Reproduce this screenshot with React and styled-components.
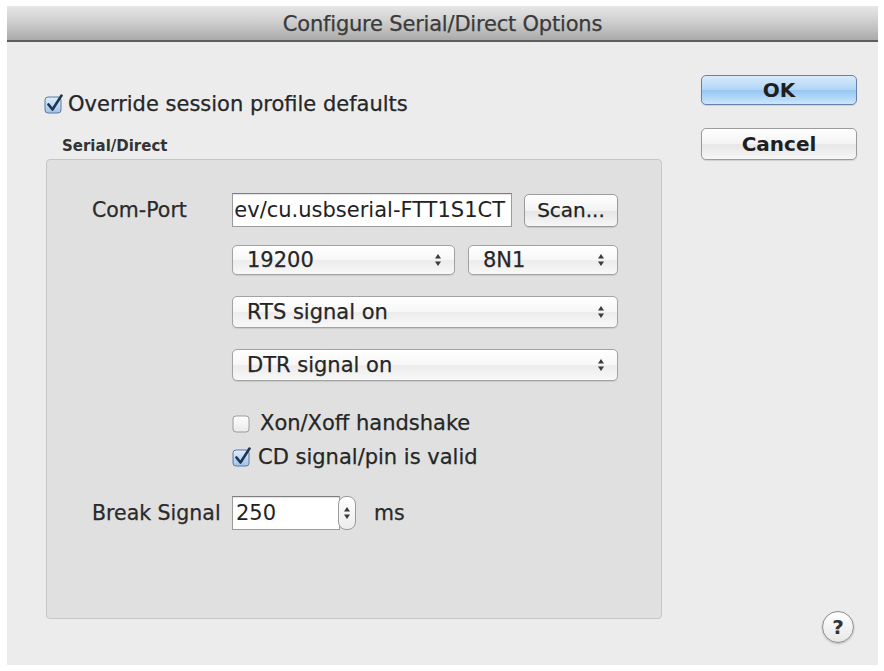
import React from "react";
import styled, { createGlobalStyle } from "styled-components";

const GlobalStyle = createGlobalStyle`
    html, body {
        margin: 0;
        padding: 0;
        background: #ffffff;
    }
    body {
        font-family: "DejaVu Sans", "Noto Sans", sans-serif;
        color: #222;
        -webkit-text-stroke: 0.25px currentColor;
    }
`;

const Window = styled.div`
    margin: 6px 0 0 7px;
    width: 871px;
    height: 659px;
    background: #ececec;
    display: flex;
    flex-direction: column;
`;

const TitleBar = styled.div`
    height: 36px;
    flex: none;
    display: flex;
    align-items: center;
    justify-content: center;
    padding-top: 2px;
    box-sizing: border-box;
    background: linear-gradient(#e6e6e6, #cfcfcf 45%, #aaaaaa);
    border-bottom: 2px solid #5e5e5e;
    font-size: 21px;
    color: #3a3a3a;
    letter-spacing: -0.2px;
`;

const Body = styled.div`
    flex: 1;
    display: grid;
    grid-template-columns: 616px 156px;
    column-gap: 39px;
    padding: 0 0 20px 39px;
`;

const LeftColumn = styled.div`
    display: flex;
    flex-direction: column;
    padding-top: 51px;
`;

const RightColumn = styled.div`
    display: flex;
    flex-direction: column;
    padding-top: 33px;
`;

const CheckRow = styled.label`
    display: flex;
    align-items: center;
    height: 22px;
    margin-top: ${(p) => p.$top || 0}px;
    margin-left: ${(p) => p.$left || 0}px;
    font-size: 21px;
    color: #262626;
    gap: ${(p) => p.$gap || 4}px;
`;

const SectionLabel = styled.div`
    margin: 21px 0 3px 16px;
    font-size: 15px;
    font-weight: bold;
    color: #333;
    line-height: 20px;
    -webkit-text-stroke: 0;
`;

const GroupBox = styled.div`
    height: 460px;
    border: 1px solid #c6c6c6;
    border-radius: 4px;
    background: #e0e0e0;
    padding: 33px 0 0 45px;
    box-sizing: border-box;
    display: flex;
    flex-direction: column;
`;

const Row = styled.div`
    display: flex;
    align-items: center;
    margin-top: ${(p) => p.$top || 0}px;
    margin-left: ${(p) => p.$indent || 0}px;
    gap: ${(p) => p.$gap || 0}px;
`;

const FieldLabel = styled.div`
    width: 140px;
    flex: none;
    font-size: 20.5px;
    color: #2a2a2a;
`;

const TextField = styled.div`
    width: ${(p) => p.$w}px;
    height: 34px;
    flex: none;
    box-sizing: border-box;
    background: #fff;
    border: 1px solid #9c9c9c;
    border-top-color: #7e7e7e;
    box-shadow: inset 0 1px 1px rgba(0, 0, 0, 0.12);
    display: flex;
    align-items: center;
    justify-content: ${(p) => (p.$end ? "flex-end" : "flex-start")};
    overflow: hidden;
    white-space: nowrap;
    padding: 0 ${(p) => (p.$end ? 6 : 3)}px;
    font-size: 21px;
    color: #222;
    -webkit-text-stroke: 0;
`;

const PushButton = styled.div`
    width: ${(p) => p.$w}px;
    height: ${(p) => p.$h || 32}px;
    flex: none;
    box-sizing: border-box;
    display: flex;
    align-items: center;
    justify-content: center;
    border-radius: 5px;
    border: 1px solid ${(p) => (p.$primary ? "#6782a8" : "#9b9b9b")};
    background: ${(p) =>
        p.$primary
            ? "linear-gradient(#d9ebfb, #b2d6f6 48%, #96c6f1 52%, #cbe6fd)"
            : "linear-gradient(#ffffff, #f3f3f3 50%, #e6e6e6 52%, #f6f6f6)"};
    box-shadow: 0 1px 1px rgba(0, 0, 0, 0.12);
    font-size: ${(p) => p.$size || 20}px;
    font-weight: ${(p) => (p.$bold ? "bold" : "normal")};
    color: #1f1f1f;
    margin-top: ${(p) => p.$top || 0}px;
    margin-left: ${(p) => p.$left || 0}px;
    -webkit-text-stroke: ${(p) => (p.$bold ? 0 : "0.25px currentColor")};
`;

const Select = styled.div`
    width: ${(p) => p.$w}px;
    height: ${(p) => p.$h || 31}px;
    box-sizing: border-box;
    display: flex;
    align-items: center;
    justify-content: space-between;
    padding: 0 12px 0 14px;
    border-radius: 5px;
    border: 1px solid #a3a3a3;
    background: linear-gradient(#ffffff, #f7f7f7 50%, #ececec 52%, #f8f8f8);
    box-shadow: 0 1px 1px rgba(0, 0, 0, 0.1);
    font-size: 21px;
    color: #262626;
`;

const Unit = styled.span`
    font-size: 20.5px;
    color: #2a2a2a;
    margin-left: 18px;
`;

const Stepper = styled.div`
    width: 18px;
    height: 34px;
    flex: none;
    box-sizing: border-box;
    border: 1px solid #9a9a9a;
    border-radius: 8px;
    background: linear-gradient(#ffffff, #ececec);
    display: flex;
    align-items: center;
    justify-content: center;
    margin-left: -2px;
`;

const HelpButton = styled.div`
    width: 32px;
    height: 32px;
    box-sizing: border-box;
    margin: auto 3px 2px auto;
    border-radius: 50%;
    border: 1px solid #8c8c8c;
    background: linear-gradient(#ffffff, #e8e8e8);
    box-shadow: 0 1px 2px rgba(0, 0, 0, 0.2);
    display: flex;
    align-items: center;
    justify-content: center;
    font-size: 20px;
    font-weight: bold;
    color: #333;
    -webkit-text-stroke: 0;
`;

function CheckBox({ checked }) {
    return (
        <svg width="20" height="20" viewBox="0 0 20 20">
            <defs>
                <linearGradient id="cbOn" x1="0" y1="0" x2="0" y2="1">
                    <stop offset="0" stopColor="#e1eefb" />
                    <stop offset="1" stopColor="#9fc2e8" />
                </linearGradient>
                <linearGradient id="cbOff" x1="0" y1="0" x2="0" y2="1">
                    <stop offset="0" stopColor="#ffffff" />
                    <stop offset="1" stopColor="#e9e9e9" />
                </linearGradient>
            </defs>
            <rect
                x="1"
                y="3"
                width="16"
                height="16"
                rx="3"
                fill={checked ? "url(#cbOn)" : "url(#cbOff)"}
                stroke={checked ? "#5b7ba2" : "#9c9c9c"}
            />
            {checked && (
                <path
                    d="M4.5 10.5 L8.5 15.5 L17.5 1.5"
                    fill="none"
                    stroke="#1e3556"
                    strokeWidth="2.6"
                    strokeLinecap="round"
                    strokeLinejoin="round"
                />
            )}
        </svg>
    );
}

function Arrows() {
    return (
        <svg width="8" height="16" viewBox="0 0 8 16">
            <path d="M1 6.5 L4 2 L7 6.5 Z" fill="#3a3a3a" />
            <path d="M1 9.5 L4 14 L7 9.5 Z" fill="#3a3a3a" />
        </svg>
    );
}

export default function App() {
    return (
        <>
            <GlobalStyle />
            <Window>
                <TitleBar>Configure Serial/Direct Options</TitleBar>
                <Body>
                    <LeftColumn>
                        <CheckRow $left={-2}>
                            <CheckBox checked />
                            Override session profile defaults
                        </CheckRow>
                        <SectionLabel>Serial/Direct</SectionLabel>
                        <GroupBox>
                            <Row>
                                <FieldLabel>Com-Port</FieldLabel>
                                <TextField $w={280} $end>
                                    /dev/cu.usbserial-FTT1S1CT
                                </TextField>
                                <PushButton $w={94} $h={33} $left={12}>
                                    Scan...
                                </PushButton>
                            </Row>
                            <Row $indent={140} $top={18} $gap={13}>
                                <Select $w={223} $h={30}>
                                    19200
                                    <Arrows />
                                </Select>
                                <Select $w={150} $h={30}>
                                    8N1
                                    <Arrows />
                                </Select>
                            </Row>
                            <Row $indent={140} $top={21}>
                                <Select $w={386} $h={32}>
                                    RTS signal on
                                    <Arrows />
                                </Select>
                            </Row>
                            <Row $indent={140} $top={21}>
                                <Select $w={386} $h={32}>
                                    DTR signal on
                                    <Arrows />
                                </Select>
                            </Row>
                            <CheckRow $left={140} $top={31} $gap={8}>
                                <CheckBox />
                                Xon/Xoff handshake
                            </CheckRow>
                            <CheckRow $left={140} $top={12} $gap={6}>
                                <CheckBox checked />
                                CD signal/pin is valid
                            </CheckRow>
                            <Row $top={28}>
                                <FieldLabel>Break Signal</FieldLabel>
                                <TextField $w={108}>250</TextField>
                                <Stepper>
                                    <Arrows />
                                </Stepper>
                                <Unit>ms</Unit>
                            </Row>
                        </GroupBox>
                    </LeftColumn>
                    <RightColumn>
                        <PushButton $w={156} $h={30} $primary $bold>
                            OK
                        </PushButton>
                        <PushButton $w={156} $h={32} $top={23} $bold>
                            Cancel
                        </PushButton>
                        <HelpButton>?</HelpButton>
                    </RightColumn>
                </Body>
            </Window>
        </>
    );
}
